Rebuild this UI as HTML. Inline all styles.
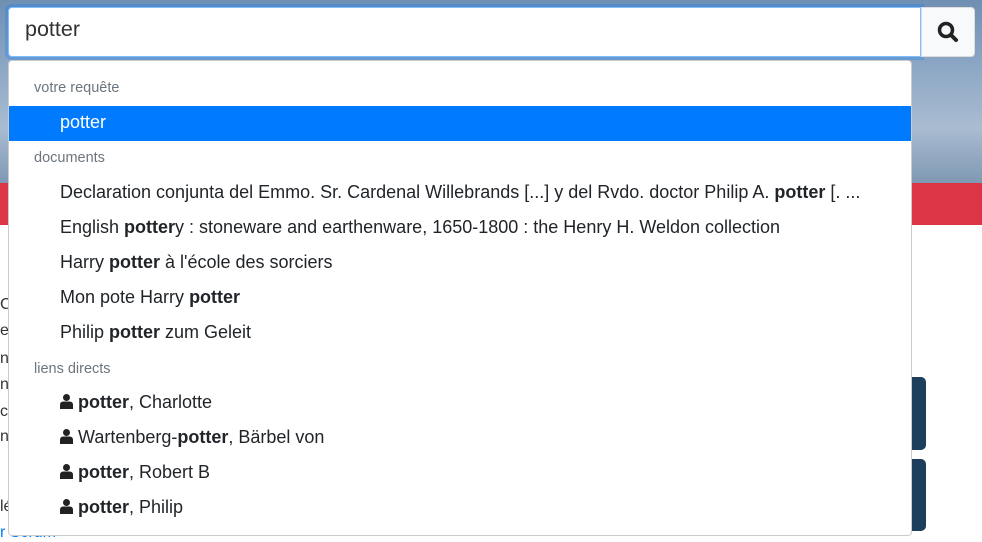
<!DOCTYPE html>
<html><head><meta charset="utf-8"><style>
*{box-sizing:border-box;margin:0;padding:0}
body{width:982px;height:541px;overflow:hidden;position:relative;font-family:"Liberation Sans",sans-serif;background:#fff;color:#212529}
.sky{position:absolute;left:0;top:0;width:982px;height:183px;background:linear-gradient(180deg,#6f8fb3 0%,#8fa9c6 40%,#a9bcd1 70%,#7f98b3 100%)}
.red{position:absolute;left:0;top:183px;width:982px;height:42px;background:#dc3545}
.input{position:absolute;left:8px;top:7px;width:913px;height:50px;background:#fff;border:1px solid #80bdff;box-shadow:0 0 0 3px rgba(0,123,255,.25);border-radius:4px 0 0 4px;font-size:21.5px;padding:9px 16px;color:#333}
.btn{position:absolute;left:921px;top:7px;width:54px;height:50px;background:#f8f9fa;border:1px solid #ddd;border-radius:0 4px 4px 0}
.dd{position:absolute;left:8px;top:60px;width:904px;height:476px;background:#fff;border:1px solid #ccc;border-radius:4px}
.h{position:absolute;left:25px;font-size:14.5px;color:#6c757d}
.r{position:absolute;left:51px;font-size:18px;color:#212529;white-space:nowrap}
.sel{position:absolute;left:0;top:45px;width:902px;height:35px;background:#007bff}
.dk{position:absolute;left:912px;width:14px;background:#1d3f5d;border-radius:0 5px 5px 0}
.side{position:absolute;left:0;font-size:16px;color:#333}
svg.p{vertical-align:-1px}
</style></head><body>
<div class="sky"></div><div class="red"></div>
<div class="side" style="top:296px">C</div><div class="side" style="top:322px">es</div><div class="side" style="top:350px">n</div><div class="side" style="top:376px">ns</div><div class="side" style="top:403px">c</div><div class="side" style="top:428px">n</div><div class="side" style="top:498px">lé</div>
<div class="side" style="top:524px;color:#007bff">r Scrum</div>
<div class="dk" style="top:377px;height:73px"></div><div class="dk" style="top:459px;height:72px"></div>
<div class="input">potter</div>
<div class="btn"><svg width="54" height="50" viewBox="0 0 54 50"><circle cx="24" cy="22" r="6.5" fill="none" stroke="#222" stroke-width="3.5"/><line x1="29" y1="27" x2="34" y2="32" stroke="#222" stroke-width="4" stroke-linecap="round"/></svg></div>
<div class="dd">
<div class="h" style="top:19px">votre requête</div>
<div class="sel"></div>
<div class="r" style="top:51px;color:#fff">potter</div>
<div class="h" style="top:89px">documents</div>
<div class="r" style="top:121px">Declaration conjunta del Emmo. Sr. Cardenal Willebrands [...] y del Rvdo. doctor Philip A. <b>potter</b> [. ...</div>
<div class="r" style="top:156px">English <b>potter</b>y : stoneware and earthenware, 1650-1800 : the Henry H. Weldon collection</div>
<div class="r" style="top:191px">Harry <b>potter</b> à l'école des sorciers</div>
<div class="r" style="top:226px">Mon pote Harry <b>potter</b></div>
<div class="r" style="top:261px">Philip <b>potter</b> zum Geleit</div>
<div class="h" style="top:300px">liens directs</div>
<div class="r" style="top:331px"><svg class="p" width="13" height="16" viewBox="0 0 13 16"><circle cx="6.5" cy="4.5" r="3.5" fill="#222"/><path d="M0 16 V12 Q0 8.5 3.5 8.5 H9.5 Q13 8.5 13 12 V16Z" fill="#222"/></svg> <b>potter</b>, Charlotte</div>
<div class="r" style="top:366px"><svg class="p" width="13" height="16" viewBox="0 0 13 16"><circle cx="6.5" cy="4.5" r="3.5" fill="#222"/><path d="M0 16 V12 Q0 8.5 3.5 8.5 H9.5 Q13 8.5 13 12 V16Z" fill="#222"/></svg> Wartenberg-<b>potter</b>, Bärbel von</div>
<div class="r" style="top:401px"><svg class="p" width="13" height="16" viewBox="0 0 13 16"><circle cx="6.5" cy="4.5" r="3.5" fill="#222"/><path d="M0 16 V12 Q0 8.5 3.5 8.5 H9.5 Q13 8.5 13 12 V16Z" fill="#222"/></svg> <b>potter</b>, Robert B</div>
<div class="r" style="top:436px"><svg class="p" width="13" height="16" viewBox="0 0 13 16"><circle cx="6.5" cy="4.5" r="3.5" fill="#222"/><path d="M0 16 V12 Q0 8.5 3.5 8.5 H9.5 Q13 8.5 13 12 V16Z" fill="#222"/></svg> <b>potter</b>, Philip</div>
</div>
</body></html>
